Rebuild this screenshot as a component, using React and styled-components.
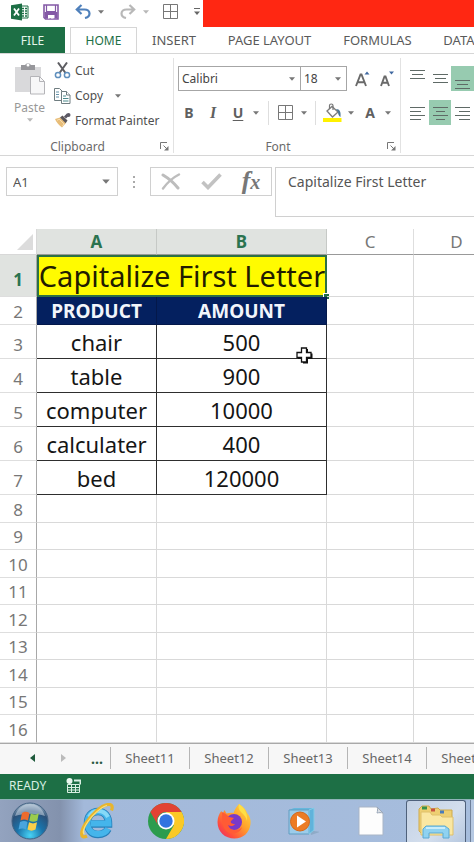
import React from "react";
import styled, { createGlobalStyle } from "styled-components";

const GREEN = "#1d6f45";
const TINT = "#97cbb0";

const GlobalStyle = createGlobalStyle`
  *, *::before, *::after { box-sizing: border-box; }
  body { margin: 0; background: #fff; }
  body, button, input, select, textarea {
    font-family: "Noto Sans", "Open Sans", sans-serif;
    font-size: 12px;
    color: #555;
  }
  button { border: 0; padding: 0; margin: 0; background: none; cursor: pointer; white-space: nowrap; }
  svg { display: block; flex: none; }
`;

const Page = styled.main`
  display: flex;
  flex-direction: column;
  height: 100vh;
  overflow: hidden;
`;

/* ---------- title bar ---------- */
const TitleBar = styled.header`
  display: flex;
  height: 27px;
  flex: none;
`;
const QuickAccess = styled.div`
  display: flex;
  align-items: center;
  width: 203px;
  flex: none;
  padding: 0 5px 4px 11px;
`;
const QuickButton = styled.button`
  display: flex;
  justify-content: center;
  margin-right: ${(p) => p.$gap || 0}px;
`;
const RedBanner = styled.div`
  flex: 1;
  background: #ff2712;
`;

/* ---------- tabs ---------- */
const Tabs = styled.nav`
  display: flex;
  height: 27px;
  flex: none;
  overflow: hidden;
  border-bottom: 1px solid #d6d6d6;
`;
const Tab = styled.button`
  flex: none;
  width: ${(p) => p.$w}px;
  height: 27px;
  padding-bottom: 1px;
  color: #5a5a5a;
  font-size: ${(p) => (p.$small ? 12 : 13)}px;
`;
const FileTab = styled(Tab)`
  background: ${GREEN};
  color: #e4f5ea;
  margin-right: 5px;
`;
const ActiveTab = styled(Tab)`
  color: ${GREEN};
  background: #fff;
  border: 1px solid #d6d6d6;
  border-bottom: 0;
`;

/* ---------- ribbon ---------- */
const Ribbon = styled.section`
  display: flex;
  height: 102px;
  flex: none;
  overflow: hidden;
  border-bottom: 1px solid #d6d6d6;
`;
const Group = styled.div`
  display: flex;
  flex-direction: column;
  flex: none;
  width: ${(p) => p.$w}px;
  margin: 4px 0 2px;
  padding: 0 4px;
  border-right: 1px solid #e2e2e2;
`;
const GroupBody = styled.div`
  display: flex;
  flex-direction: ${(p) => (p.$column ? "column" : "row")};
  flex: 1;
`;
const GroupFooter = styled.div`
  display: grid;
  grid-template-columns: 9px 1fr 9px;
  align-items: center;
  height: 15px;
  color: #6b6b6b;
  text-align: center;
`;
const GroupName = styled.span`
  grid-column: 2;
  padding-right: ${(p) => p.$shift || 0}px;
`;
const PasteButton = styled.button`
  display: flex;
  flex-direction: column;
  align-items: center;
  width: 50px;
  padding: 3px 0 0 1px;
  gap: 2px;
  color: #989898;
`;
const ClipList = styled.div`
  display: flex;
  flex-direction: column;
`;
const ClipButton = styled.button`
  display: flex;
  align-items: center;
  gap: 4px;
  height: 25px;
  color: #505050;
`;
const CaretWrap = styled.span`
  padding-left: 8px;
`;
const FontRow = styled.div`
  display: flex;
  align-items: center;
  height: 25px;
  margin-top: ${(p) => p.$top}px;
`;
const SelectBox = styled.label`
  display: grid;
  grid-template-columns: 1fr 11px;
  align-items: center;
  width: ${(p) => p.$w}px;
  height: 25px;
  border: 1px solid #a6a6a6;
  & + & { margin-left: -1px; }
`;
const Select = styled.select`
  grid-area: 1 / 1 / 2 / 3;
  appearance: none;
  border: 0;
  background: transparent;
  height: 23px;
  padding: 0 0 0 3px;
  width: 100%;
  color: #444;
`;
const SelectCaret = styled.span`
  grid-area: 1 / 2 / 2 / 3;
  pointer-events: none;
`;
const ToolButton = styled.button`
  display: flex;
  align-items: center;
  justify-content: center;
  width: ${(p) => p.$w}px;
  height: 25px;
  font-size: 14px;
  font-weight: 700;
  color: #606060;
  background: ${(p) => (p.$on ? TINT : "none")};
`;
const Italic = styled.i`
  font-family: "Liberation Serif", serif;
  font-size: 16px;
`;
const Underlined = styled.span`
  text-decoration: underline;
  text-underline-offset: 2px;
`;
const Divider = styled.span`
  width: 1px;
  height: 24px;
  background: #dedede;
  margin: 0 ${(p) => p.$after}px 0 ${(p) => p.$before}px;
`;
const AlignGroup = styled.div`
  flex: 1;
  min-width: 0;
  overflow: hidden;
  padding: 4px 0 0 5px;
`;

/* ---------- formula bar ---------- */
const FormulaBar = styled.section`
  display: flex;
  align-items: flex-start;
  flex: none;
  height: 73px;
  padding: 11px 0 0 6px;
`;
const NameBox = styled.div`
  display: flex;
  align-items: center;
  width: 112px;
  height: 29px;
  border: 1px solid #d0d0d0;
  padding-right: 7px;
`;
const NameInput = styled.input`
  flex: 1;
  min-width: 0;
  border: 0;
  outline: 0;
  padding: 0 0 0 6px;
  font-size: 13px;
`;
const Dots = styled.span`
  display: flex;
  align-items: center;
  justify-content: center;
  width: 32px;
  height: 29px;
`;
const FxBox = styled.div`
  display: grid;
  grid-template-columns: 40px 40px 1fr;
  place-items: center;
  width: 122px;
  height: 29px;
  border: 1px solid #d0d0d0;
  margin-right: 3px;
`;
const FxButton = styled.button`
  font-family: "Liberation Serif", serif;
  font-style: italic;
  font-weight: 700;
  font-size: 26px;
  line-height: 26px;
  color: #777;
`;
const FxSub = styled.span`
  font-size: 20px;
`;
const FormulaInput = styled.textarea`
  flex: 1;
  min-width: 0;
  height: 50px;
  border: 1px solid #d0d0d0;
  border-right: 0;
  resize: none;
  outline: 0;
  padding: 5px 0 0 12px;
  font-size: 14px;
  line-height: 18px;
`;

/* ---------- sheet ---------- */
const SheetArea = styled.section`
  flex: 1;
  min-height: 0;
  overflow: hidden;
`;
const Grid = styled.table`
  table-layout: fixed;
  border-collapse: separate;
  border-spacing: 0;
  width: 100%;
  min-width: 500px;
`;
const Col = styled.col`
  width: ${(p) => p.$w}px;
`;
const Row = styled.tr`
  height: ${(p) => p.$h}px;
`;
const ColHead = styled.th`
  padding: 0;
  height: 26px;
  font-size: 17px;
  line-height: 24px;
  font-weight: ${(p) => (p.$on ? 700 : 400)};
  color: ${(p) => (p.$on ? "#2b7350" : "#777")};
  background: ${(p) => (p.$on ? "#e0e3e0" : "#fff")};
  border-right: 1px solid ${(p) => (p.$on ? "#c6c9c6" : "#dedede")};
  border-bottom: 1px solid #999;
`;
const Corner = styled.td`
  padding: 0 3px 4px 0;
  vertical-align: bottom;
  border-bottom: 1px solid #d8d8d8;
  border-right: 1px solid #d8d8d8;
  & > svg { margin-left: auto; }
`;
const RowHead = styled.th`
  padding: ${(p) => p.$top || 0}px 0 0;
  font-size: 17px;
  line-height: 20px;
  font-weight: ${(p) => (p.$on ? 700 : 400)};
  color: ${(p) => (p.$on ? "#2b7350" : "#777")};
  background: ${(p) => (p.$on ? "#e0e3e0" : "#fff")};
  border-right: 1px solid #a8a8a8;
  border-bottom: 1px solid #dedede;
`;
const Cell = styled.td`
  position: relative;
  padding: 0;
  border-right: 1px solid ${(p) => (p.$boxed ? "#2e2e2e" : "#d9d9d9")};
  border-bottom: 1px solid ${(p) => (p.$boxed ? "#2e2e2e" : "#d9d9d9")};
  text-align: center;
  font-size: 22px;
  line-height: 24px;
  color: #151515;
`;
const HeaderCell = styled(Cell)`
  background: #04205f;
  color: #f2f5fb;
  font-size: 19px;
  font-weight: 700;
  border-color: #04184a;
`;
const TitleCell = styled(Cell)`
  background: #fffb00;
  color: #221c00;
  font-size: 29px;
  line-height: 36px;
  white-space: nowrap;
  border: 0;
  box-shadow: inset 0 0 0 2px #2c7045;
`;
const FillHandle = styled.span`
  position: absolute;
  right: -2px;
  bottom: -2px;
  width: 6px;
  height: 6px;
  background: ${GREEN};
  border-top: 1px solid #fff;
  border-left: 1px solid #fff;
`;
const Pointer = styled.span`
  position: absolute;
  right: 13px;
  bottom: -6px;
  z-index: 1;
`;

/* ---------- sheet tabs, status, taskbar ---------- */
const SheetTabs = styled.nav`
  display: flex;
  align-items: center;
  flex: none;
  height: 31px;
  overflow: hidden;
  padding: 0 0 2px 22px;
  background: #f7f7f7;
  border-top: 1px solid #a9a9a9;
`;
const SheetNav = styled.button`
  display: flex;
  align-items: center;
  justify-content: center;
  flex: none;
  height: 22px;
  width: ${(p) => p.$w}px;
  font-weight: 700;
  font-size: 14px;
  color: #2b5a43;
`;
const SheetTab = styled.button`
  flex: none;
  width: 79px;
  height: 22px;
  font-size: 13px;
  color: #666;
  border-left: 1px solid #b5b5b5;
`;
const StatusBar = styled.footer`
  display: flex;
  align-items: center;
  flex: none;
  height: 25px;
  gap: 20px;
  padding: 0 9px 2px;
  background: ${GREEN};
  color: #d9efe2;
  font-size: 12px;
`;
const Taskbar = styled.nav`
  display: flex;
  align-items: center;
  flex: none;
  height: 43px;
  overflow: hidden;
  border-top: 1px solid #8fb3b8;
  background: linear-gradient(90deg, #93a3bf 0, #8392ad 60px, #a3b9da 84px, #a6bddd 100%);
`;
const TaskButton = styled.button`
  display: flex;
  align-items: center;
  justify-content: center;
  flex: none;
  width: ${(p) => p.$w}px;
  height: 42px;
`;
const ActiveTask = styled(TaskButton)`
  background: linear-gradient(135deg, #c3d1e4, #d3deed 60%, #b6c8e0);
  border: 1px solid #4f617b;
  border-bottom: 0;
  border-radius: 3px 3px 0 0;
  margin-right: 4px;
`;
const NextTask = styled(TaskButton)`
  border-left: 1px solid #6d7f9a;
  background: #b5c8e2;
`;

/* ---------- icons ---------- */
const Caret = ({ w = 6, color = "#777" }) => (
  <svg width={w} height={w / 2 + 1} viewBox="0 0 6 4"><path d="M0 .3h6L3 3.7z" fill={color} /></svg>
);
const ExcelIcon = () => (
  <svg width="18" height="18" viewBox="0 0 18 18">
    <path d="M9 3h8v12H9z" fill="#fff" stroke={GREEN} />
    <path d="M11 5.5h2m1 0h2M11 8h2m1 0h2m-5 2.5h2m1 0h2M11 13h2m1 0h2" stroke={GREEN} strokeWidth="1.4" />
    <path d="M0 2.200 11 .5v17L0 15.800z" fill={GREEN} />
    <path d="M3 5.500l5 7M8 5.500l-5 7" stroke="#fff" strokeWidth="1.800" />
  </svg>
);
const SaveIcon = () => (
  <svg width="16" height="16" viewBox="0 0 16 16">
    <path d="M1 1h14v14H2.500L1 13.500z" fill="#fff" stroke="#8459a6" strokeWidth="1.600" />
    <path d="M3.500 1v6.500h9V1" fill="none" stroke="#8459a6" strokeWidth="1.200" />
    <path d="M1.500 8h13v6.500h-3V11H5v3.500H2z" fill="#8459a6" />
    <path d="M5 11h5.500v3.500H8V12.500H6.500v2H5z" fill="#fff" />
  </svg>
);
const UndoIcon = ({ color, flip }) => (
  <svg width="16" height="15" viewBox="0 0 16 15">
    <g transform={flip ? "matrix(-1 0 0 1 16 0)" : undefined} fill="none" stroke={color} strokeWidth="2.200">
      <path d="M6.500 1 1.800 5.500l4.700 4.500M2 5.500h7.500c3 0 5 1.700 5 4 0 2.200-1.500 3.800-4.500 4.500" />
    </g>
  </svg>
);
const BordersIcon = () => (
  <svg width="15" height="15" viewBox="0 0 15 15" fill="none" stroke="#777" strokeWidth="1">
    <path d="M.5.5h14v14H.5zM7.500.5v14M.5 7.500h14" />
  </svg>
);
const MoreIcon = () => (
  <svg width="6" height="8" viewBox="0 0 6 8"><path d="M0 .5h6" stroke="#666" /><path d="M0 3.500h6L3 7z" fill="#666" /></svg>
);
const PasteIcon = () => (
  <svg width="32" height="36" viewBox="0 0 32 36">
    <path d="M1 6h26v25H1z" fill="#d9d9db" />
    <path d="M7 4h4a3.500 3.500 0 0 1 6 0h4v5H7z" fill="#97979b" />
    <circle cx="14" cy="4" r="1.500" fill="#fff" />
    <path d="M16.500 15.500h9l5 5V33h-14z" fill="#f7f7f8" stroke="#b4b4b8" />
    <path d="M25.500 15.500v5h5" fill="none" stroke="#b4b4b8" />
  </svg>
);
const CutIcon = () => (
  <svg width="17" height="17" viewBox="0 0 17 17" fill="none">
    <path d="M4 .5 11.500 11M13 .5 5.500 11" stroke="#5d5d62" strokeWidth="2" />
    <circle cx="4" cy="13" r="2.600" stroke="#5f8fbd" strokeWidth="1.500" />
    <circle cx="13" cy="13" r="2.600" stroke="#5f8fbd" strokeWidth="1.500" />
  </svg>
);
const CopyIcon = () => (
  <svg width="17" height="16" viewBox="0 0 17 16" fill="#fff" stroke="#6f7d80">
    <path d="M.5.5h5L8 3v9.500H.5z" />
    <path d="M2 4h3M2 6.500h3M2 9h3" stroke="#6592a8" />
    <path d="M7.500 3.500h5L16 7v8.500H7.500z" />
    <path d="M12.500 3.500V7H16" />
    <path d="M9 8h3M9 10.500h5.500M9 13h5.500" stroke="#4b8a8c" />
  </svg>
);
const PainterIcon = () => (
  <svg width="17" height="15" viewBox="0 0 17 15">
    <path d="M1 6 6 4.500l6 5.500-4 4.500C5 12.500 2.500 9.500 1 6z" fill="#e8bd78" />
    <path d="M3 7.500 5 6l5 5-1.500 2" stroke="#f7dcaf" fill="none" />
    <path d="m6 4.500 2.500-2 5 5-1.800 2.800z" fill="#5b5558" />
    <path d="m11 4.500 3-3" stroke="#5b5864" strokeWidth="3" />
    <circle cx="14.500" cy="2" r="2" fill="#5b5864" />
  </svg>
);
const Launcher = () => (
  <svg width="9" height="9" viewBox="0 0 9 9" fill="none" stroke="#777">
    <path d="M.5 7V.5H7M3.500 3.500l4 4" /><path d="M8.500 4v4.500H4z" fill="#777" stroke="none" />
  </svg>
);
const FontSizeIcon = ({ down }) => (
  <svg width="16" height="18" viewBox="0 0 16 18">
    <path d={down ? "M2 16 5.500 6.500h1L10 16M3.500 12.800h5" : "M1 16 5.500 4.500h1L11 16M3 12.300h6"} fill="none" stroke="#6a6a6a" strokeWidth="1.900" />
    <path d={down ? "M10 1.500h5l-2.500 3z" : "M9.500 4.500h5L12 1.500z"} fill="#3f68a0" />
  </svg>
);
const BucketIcon = () => (
  <svg width="20" height="20" viewBox="0 0 20 20">
    <path d="M4 8 9 3.500 15 9l-5.500 5z" fill="#fff" stroke="#7d7d7d" strokeWidth="1.300" />
    <path d="M6.500 6V2.500c0-2 3.500-2 3.500 0V7" fill="none" stroke="#777" strokeWidth="1.200" />
    <path d="M13 6c4 0 5 3 4.500 8-1.500-1-2.500-2.500-2.500-5z" fill="#4c7796" />
    <path d="M0 15h18.500v4H0z" fill="#fff100" />
  </svg>
);
const LINES = {
  top: [[0, 15], [2, 13], [0, 15], [2, 13]],
  left: [[0, 15], [0, 11], [0, 15], [0, 11]],
  center: [[0, 15], [3, 12], [0, 15], [3, 12]],
  right: [[0, 15], [4, 15], [0, 15], [4, 15]],
};
const LinesIcon = ({ kind, count = 3, y = 0, gap = 4 }) => (
  <svg width="15" height="24" viewBox="0 0 15 24" stroke="#5f6a66">
    {LINES[kind].slice(0, count).map(([a, b], i) => (
      <path key={i} d={`M${a} ${y + i * gap + 0.5}H${b}`} />
    ))}
  </svg>
);
const CornerIcon = () => (
  <svg width="16" height="16" viewBox="0 0 16 16"><path d="M16 0v16H0z" fill="#dcdcdc" /></svg>
);
const CancelIcon = () => (
  <svg width="20" height="17" viewBox="0 0 20 17" fill="none" stroke="#bdbdbd" strokeLinecap="round">
    <path d="M2 2c5 3 11 8 15 13" strokeWidth="3" /><path d="M18 1.500C11 5 6 10 2 15.500" strokeWidth="2.400" />
  </svg>
);
const EnterIcon = () => (
  <svg width="21" height="17" viewBox="0 0 21 17" fill="none" stroke="#c2c2c2">
    <path d="M1.500 9 7 14.500 19.500 1.500" strokeWidth="3.600" />
  </svg>
);
const DotsIcon = () => (
  <svg width="2" height="12" viewBox="0 0 2 12" fill="#aaa"><path d="M0 0h2v2H0zM0 5h2v2H0zM0 10h2v2H0z" /></svg>
);
const CrossIcon = () => (
  <svg width="17" height="17" viewBox="0 0 17 17">
    <path d="M7 2h5v4.500h4.500V12H12v4.500H7V12H2V6.500h5z" fill="#111" />
    <path d="M5.500 1h5v4.500H15v5h-4.500V15h-5v-4.500H1v-5h4.500z" fill="#fff" stroke="#111" strokeWidth="1.300" />
  </svg>
);
const MacroIcon = () => (
  <svg width="15" height="15" viewBox="0 0 15 15" fill="none" stroke="#d9efe2">
    <path d="M1.500 6.500h12v8h-12zM1 9.500h13M1 12h13M5.500 7v7M9.500 7v7" />
    <path d="M8 2.500h6.500v4" strokeWidth="2" />
    <circle cx="3.500" cy="3" r="3" fill="#e9f7ee" stroke="none" />
  </svg>
);
const Arrow = ({ left }) => (
  <svg width="5" height="8" viewBox="0 0 5 8"><path d={left ? "M5 0v8L0 4z" : "M0 0v8l5-4z"} fill={left ? "#1f5a3c" : "#bbb"} /></svg>
);
const StartIcon = () => (
  <svg width="38" height="38" viewBox="0 0 38 38">
    <defs>
      <radialGradient id="orb" cx=".5" cy=".9" r=".9">
        <stop offset="0" stopColor="#48d3f5" /><stop offset=".4" stopColor="#1a74ab" /><stop offset=".75" stopColor="#2c5078" /><stop offset="1" stopColor="#a7bccd" />
      </radialGradient>
    </defs>
    <circle cx="19" cy="19" r="18" fill="url(#orb)" stroke="#426283" />
    <path d="M4 14C7 5 13 2 19 2s12 3 15 12c-9-3-20-3-30 0z" fill="#dbe6ef" opacity=".5" />
    <path d="M11 11c3-2 5-1.500 7.500 0l-1.500 7.500c-3-1.500-5-1.500-7.500 0z" fill="#ed6b2d" />
    <path d="M19.800 11.500c3 1.500 5 1.500 8-.3l-1.500 7.500c-3 1.500-5 1.500-8 0z" fill="#9bcb4d" />
    <path d="M9 20c3-1.500 5-1.500 7.500 0L15 27.500c-2.500-1.500-4.500-1.500-7.500 0z" fill="#4aa5dd" />
    <path d="M18 20.300c3 1.500 5 1.500 8 0l-1.500 7.200c-3 1.500-5 1.500-8 0z" fill="#fbcf49" />
  </svg>
);
const ExplorerIcon = () => (
  <svg width="36" height="36" viewBox="0 0 36 36" fill="none">
    <path d="M29 26C27 30 23.500 31.500 19 31.500c-6.500 0-10.500-5-10.500-11.500S12.500 8.500 19 8.500c7 0 10.500 5 10.500 12.500H12" stroke="#277fb9" strokeWidth="7.500" />
    <path d="M29 25.500C27 29.500 23.500 31 19 31c-6.500 0-10.500-4.500-10.500-11S12.500 8.500 19 8.500c7 0 10.500 5 10.500 12H12" stroke="#45b5eb" strokeWidth="6" />
    <path d="M10 14c2-4 5-6 9-6s8 2 10 6" stroke="#86d9f8" strokeWidth="4" />
    <path d="M8 33c-7 3.500-7-4-1-13S22 2.500 29 1.500c4-.5 5 2 3.500 6" stroke="#e8b52c" strokeWidth="3.200" />
    <path d="M5.500 31C3 30 4.500 25 9 18.500S22 4 28 2.500" stroke="#f9e27e" strokeWidth="1.200" />
  </svg>
);
const ChromeIcon = () => (
  <svg width="36" height="36" viewBox="0 0 36 36">
    <circle cx="18" cy="18" r="18" fill="#2c9c4e" />
    <path d="M18 9h15.600A18 18 0 0 1 18 36l7.800-13.500z" fill="#fbc926" />
    <path d="M2.400 9A18 18 0 0 1 33.600 9H18a9 9 0 0 0-7.800 13.500z" fill="#e24233" />
    <circle cx="18" cy="18" r="8.500" fill="#fff" /><circle cx="18" cy="18" r="6.700" fill="#3274e0" />
  </svg>
);
const FirefoxIcon = () => (
  <svg width="36" height="36" viewBox="0 0 36 36">
    <defs>
      <linearGradient id="ff" x1="1" y1="0" x2="0" y2="1"><stop stopColor="#ffe34b" /><stop offset=".4" stopColor="#ffa62b" /><stop offset=".75" stopColor="#ff4e3c" /><stop offset="1" stopColor="#e0247a" /></linearGradient>
    </defs>
    <path d="M23 1c5 3 7 6 8 9 3 3 4 7 3.500 11C33.500 30 27 35.500 18.500 35.500 9 35.500 1.500 29 1.500 19c0-5 2-9 4-11l1 3 2-4 2 3.500c3-1 5-1 7-.5 1.500-4 3-6.500 5.500-9z" fill="url(#ff)" />
    <circle cx="18" cy="19" r="8" fill="#7a39c9" />
    <path d="M6 9c3 1 5 3 7 5l5 1-3 3c-1 2 1 3 4 3-2 3-5 2-7 1 2 6 10 7 14 2-2 8-14 9-18 1-3-6-2-12-2-16z" fill="#ff5b35" />
    <path d="M23 1c6 4 9 11 8 17-1-4-3-6-5-8-3-3-4-5-3-9z" fill="#ffdf45" />
  </svg>
);
const PlayerIcon = () => (
  <svg width="32" height="29" viewBox="0 0 32 29">
    <path d="M22 5 27 2v22l6 1-9 3z" fill="#7799b2" opacity=".5" />
    <path d="M2 3 7 1h20v22l-5 4H2z" fill="#66b7dc" />
    <path d="M2 3h20v24H2z" fill="#9cccea" stroke="#609dc1" />
    <path d="m22 3 5-2v22l-5 4z" fill="#60b3db" stroke="#86cae6" />
    <circle cx="13" cy="14.500" r="9.500" fill="#ec7c25" stroke="#d5691b" />
    <path d="m10 8.500 9 6-9 6z" fill="#fff" />
  </svg>
);
const DocIcon = () => (
  <svg width="28" height="32" viewBox="0 0 28 32">
    <path d="M2 2h18l6 6v22H2z" fill="#fdfdfd" stroke="#a9b5c6" />
    <path d="M20 2c1 2 .5 4 0 6 2-.5 4-.5 6 0z" fill="#d8dde4" stroke="#9ba8b9" />
  </svg>
);
const FolderIcon = () => (
  <svg width="38" height="34" viewBox="0 0 38 34">
    <path d="M2 4 5 1h7l2 3 7-1 2 2h12v24H5L2 26z" fill="#eecf72" stroke="#cfaa4b" />
    <path d="M4 7h9l2 3h8l2 2h11v18H4z" fill="#fae7a2" stroke="#dfc06b" />
    <path d="M5 3h5" stroke="#36914b" strokeWidth="3" /><path d="M14 5h4" stroke="#c85240" strokeWidth="3" /><path d="M23 7h4" stroke="#4a7cba" strokeWidth="3" />
    <path d="M6 33v-9l3-3h19l4 3v9h-6v-5H12v5z" fill="#8fd2f1" stroke="#5aa9d2" />
    <path d="M9 23h19" stroke="#c9edfb" strokeWidth="2" />
  </svg>
);

/* ---------- data ---------- */
const TABS = [["INSERT", 74], ["PAGE LAYOUT", 117], ["FORMULAS", 99], ["DATA", 64]];
const PRODUCTS = [["chair", "500"], ["table", "900"], ["computer", "10000"], ["calculater", "400"], ["bed", "120000"]];
const EMPTY_ROWS = [8, 9, 10, 11, 12, 13, 14, 15, 16];
const SHEETS = ["Sheet11", "Sheet12", "Sheet13", "Sheet14", "Sheet15"];

export default function App() {
  return (
    <Page>
      <GlobalStyle />
      <TitleBar>
        <QuickAccess>
          <QuickButton $gap={14} aria-label="Excel"><ExcelIcon /></QuickButton>
          <QuickButton $gap={16} aria-label="Save"><SaveIcon /></QuickButton>
          <QuickButton $gap={7} aria-label="Undo"><UndoIcon color="#4f80bb" /></QuickButton>
          <QuickButton $gap={16} aria-label="Undo list"><Caret /></QuickButton>
          <QuickButton $gap={7} aria-label="Redo"><UndoIcon color="#b8b8b8" flip /></QuickButton>
          <QuickButton $gap={14} aria-label="Redo list"><Caret color="#b8b8b8" /></QuickButton>
          <QuickButton $gap={16} aria-label="Borders"><BordersIcon /></QuickButton>
          <QuickButton aria-label="Customize toolbar"><MoreIcon /></QuickButton>
        </QuickAccess>
        <RedBanner />
      </TitleBar>

      <Tabs>
        <FileTab $w={65} $small>FILE</FileTab>
        <ActiveTab $w={67} $small>HOME</ActiveTab>
        {TABS.map(([name, w]) => <Tab key={name} $w={w}>{name}</Tab>)}
      </Tabs>

      <Ribbon>
        <Group $w={174}>
          <GroupBody>
            <PasteButton><PasteIcon />Paste<Caret color="#b8b8b8" /></PasteButton>
            <ClipList>
              <ClipButton><CutIcon />Cut</ClipButton>
              <ClipButton><CopyIcon />Copy<CaretWrap><Caret /></CaretWrap></ClipButton>
              <ClipButton><PainterIcon />Format Painter</ClipButton>
            </ClipList>
          </GroupBody>
          <GroupFooter><GroupName $shift={18}>Clipboard</GroupName><button aria-label="Clipboard options"><Launcher /></button></GroupFooter>
        </Group>

        <Group $w={227}>
          <GroupBody $column>
            <FontRow $top={8}>
              <SelectBox $w={123}>
                <Select aria-label="Font" defaultValue="Calibri"><option>Calibri</option></Select>
                <SelectCaret><Caret /></SelectCaret>
              </SelectBox>
              <SelectBox $w={47}>
                <Select aria-label="Font size" defaultValue="18"><option>18</option></Select>
                <SelectCaret><Caret /></SelectCaret>
              </SelectBox>
              <ToolButton $w={32} aria-label="Increase font size"><FontSizeIcon /></ToolButton>
              <ToolButton $w={16} aria-label="Decrease font size"><FontSizeIcon down /></ToolButton>
            </FontRow>
            <FontRow $top={9}>
              <ToolButton $w={22}>B</ToolButton>
              <ToolButton $w={26}><Italic>I</Italic></ToolButton>
              <ToolButton $w={24}><Underlined>U</Underlined></ToolButton>
              <ToolButton $w={12} aria-label="Underline styles"><Caret /></ToolButton>
              <Divider $before={6} $after={3} />
              <ToolButton $w={26} aria-label="Borders"><BordersIcon /></ToolButton>
              <ToolButton $w={12} aria-label="Border styles"><Caret /></ToolButton>
              <Divider $before={5} $after={4} />
              <ToolButton $w={25} aria-label="Fill color"><BucketIcon /></ToolButton>
              <ToolButton $w={12} aria-label="Fill colors"><Caret /></ToolButton>
              <ToolButton $w={26}>A</ToolButton>
              <ToolButton $w={10} aria-label="Font colors"><Caret /></ToolButton>
            </FontRow>
          </GroupBody>
          <GroupFooter><GroupName $shift={18}>Font</GroupName><button aria-label="Font options"><Launcher /></button></GroupFooter>
        </Group>

        <AlignGroup>
          <FontRow $top={8}>
            <ToolButton $w={24} aria-label="Top align"><LinesIcon kind="top" y={3} /></ToolButton>
            <ToolButton $w={24} aria-label="Middle align"><LinesIcon kind="top" y={7} /></ToolButton>
            <ToolButton $w={24} $on aria-label="Bottom align"><LinesIcon kind="top" y={13} /></ToolButton>
          </FontRow>
          <FontRow $top={9}>
            <ToolButton $w={24} aria-label="Align left"><LinesIcon kind="left" count={4} y={6} /></ToolButton>
            <ToolButton $w={24} $on aria-label="Center"><LinesIcon kind="center" count={4} y={6} /></ToolButton>
            <ToolButton $w={24} aria-label="Align right"><LinesIcon kind="right" count={4} y={6} /></ToolButton>
          </FontRow>
        </AlignGroup>
      </Ribbon>

      <FormulaBar>
        <NameBox>
          <NameInput aria-label="Name box" defaultValue="A1" />
          <button aria-label="Names"><Caret w={8} /></button>
        </NameBox>
        <Dots><DotsIcon /></Dots>
        <FxBox>
          <button aria-label="Cancel"><CancelIcon /></button>
          <button aria-label="Enter"><EnterIcon /></button>
          <FxButton>f<FxSub>x</FxSub></FxButton>
        </FxBox>
        <FormulaInput aria-label="Formula" defaultValue="Capitalize First Letter" />
      </FormulaBar>

      <SheetArea>
        <Grid>
          <colgroup><Col $w={37} /><Col $w={120} /><Col $w={170} /><Col $w={87} /><col /></colgroup>
          <thead>
            <Row $h={26}>
              <Corner><CornerIcon /></Corner>
              <ColHead $on>A</ColHead><ColHead $on>B</ColHead><ColHead>C</ColHead><ColHead>D</ColHead>
            </Row>
          </thead>
          <tbody>
            <Row $h={42}>
              <RowHead $on $top={8}>1</RowHead>
              <TitleCell colSpan={2}>Capitalize First Letter<FillHandle /></TitleCell>
              <Cell /><Cell />
            </Row>
            <Row $h={28}>
              <RowHead $top={2}>2</RowHead>
              <HeaderCell>PRODUCT</HeaderCell><HeaderCell>AMOUNT</HeaderCell>
              <Cell /><Cell />
            </Row>
            {PRODUCTS.map(([name, amount], i) => (
              <Row $h={34} key={name}>
                <RowHead $top={6}>{i + 3}</RowHead>
                <Cell $boxed>{name}</Cell>
                <Cell $boxed>{amount}{i === 0 && <Pointer><CrossIcon /></Pointer>}</Cell>
                <Cell /><Cell />
              </Row>
            ))}
            {EMPTY_ROWS.map((n) => (
              <Row $h={n % 2 ? 27 : 28} key={n}>
                <RowHead $top={2}>{n}</RowHead><Cell /><Cell /><Cell /><Cell />
              </Row>
            ))}
          </tbody>
        </Grid>
      </SheetArea>

      <SheetTabs>
        <SheetNav $w={20} aria-label="Previous sheet"><Arrow left /></SheetNav>
        <SheetNav $w={42} aria-label="Next sheet"><Arrow /></SheetNav>
        <SheetNav $w={26}>...</SheetNav>
        {SHEETS.map((s) => <SheetTab key={s}>{s}</SheetTab>)}
      </SheetTabs>
      <StatusBar>READY<MacroIcon /></StatusBar>
      <Taskbar>
        <TaskButton $w={60} aria-label="Start"><StartIcon /></TaskButton>
        <TaskButton $w={74} aria-label="Internet Explorer"><ExplorerIcon /></TaskButton>
        <TaskButton $w={64} aria-label="Chrome"><ChromeIcon /></TaskButton>
        <TaskButton $w={72} aria-label="Firefox"><FirefoxIcon /></TaskButton>
        <TaskButton $w={66} aria-label="Media player"><PlayerIcon /></TaskButton>
        <TaskButton $w={70} aria-label="Document"><DocIcon /></TaskButton>
        <ActiveTask $w={60} aria-label="File explorer"><FolderIcon /></ActiveTask>
        <NextTask $w={60} aria-label="Window" />
      </Taskbar>
    </Page>
  );
}
